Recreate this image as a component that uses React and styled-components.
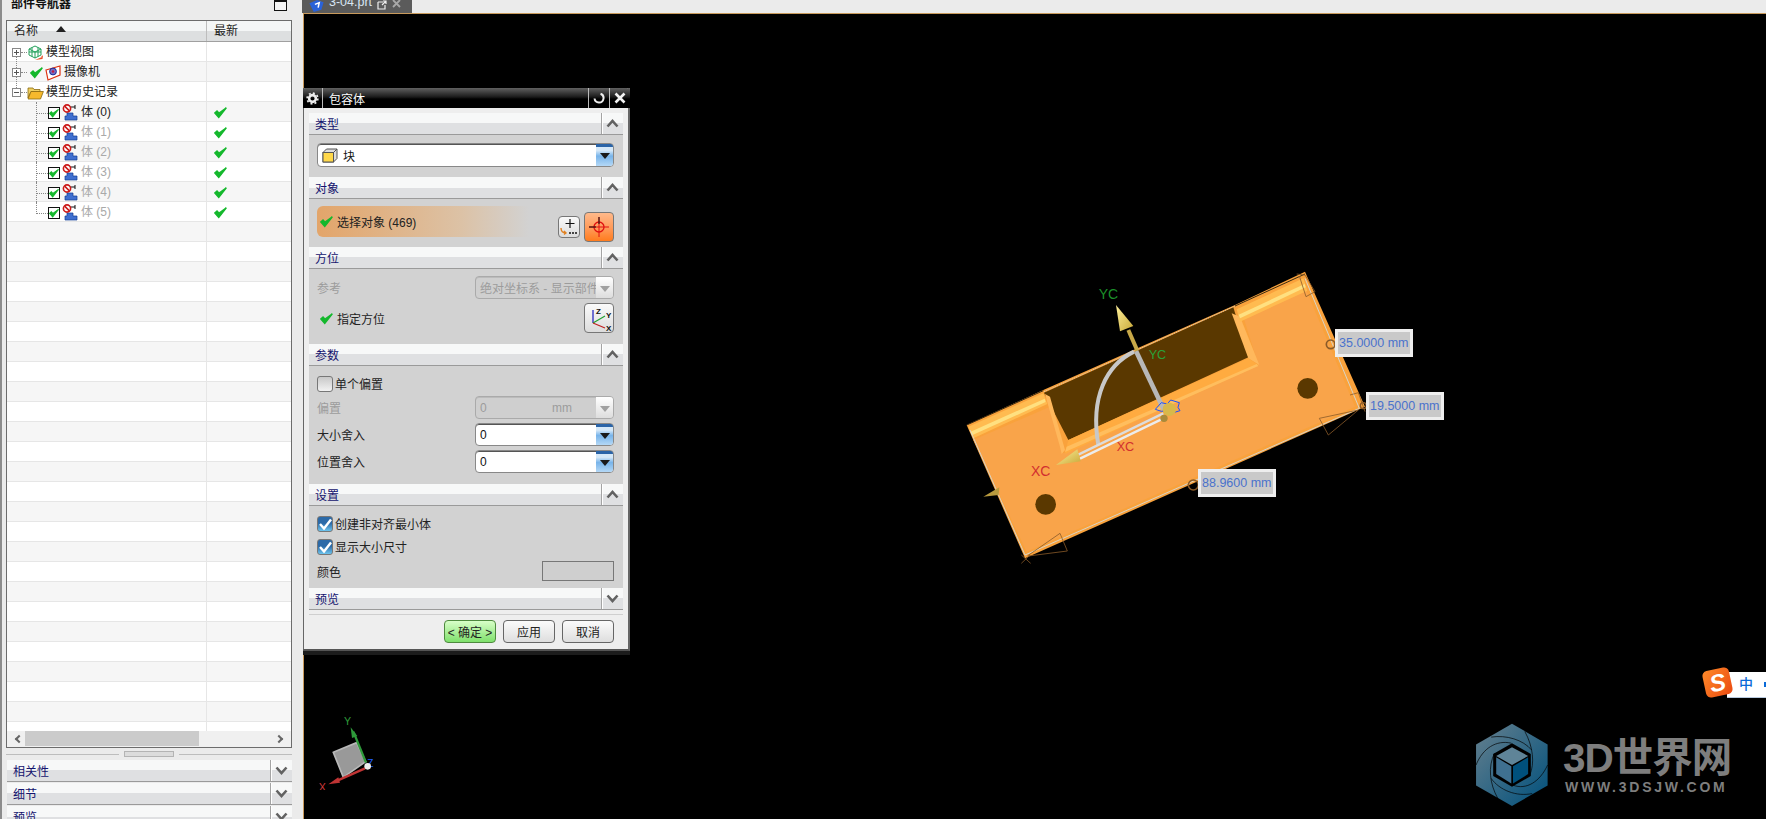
import React from "react";
import styled, { createGlobalStyle } from "styled-components";

const GlobalStyle = createGlobalStyle`
  html, body { margin: 0; padding: 0; background: #000; }
  * { box-sizing: border-box; }
  body { font-family: "Liberation Sans", "Noto Sans CJK SC", sans-serif; font-size: 12px; color: #222; }
`;

const CheckMark = ({ size = 13 }) => (
  <svg width={size} height={size} viewBox="0 0 12 12">
    <path d="M0.8 6.4 L4.4 10.6 L11.4 1.6 L4.7 6.6 L2.8 4.6 Z" fill="#14b82c" stroke="#14b82c" strokeWidth="1.3" />
  </svg>
);

const TreeCheck = () => (
  <CheckBoxFrame>
    <CheckMark size={10} />
  </CheckBoxFrame>
);

const BodyIcon = () => (
  <svg width="17" height="17" viewBox="0 0 17 17">
    <path d="M5 9h6v3h4v4H3v-4h2z" fill="#3f6fd0" stroke="#123c94" strokeWidth=".7" />
    <path d="M7 1v7M7 3h6M13 1v4" stroke="#111" strokeWidth="1" fill="none" />
    <circle cx="5" cy="4.5" r="3.6" fill="#fff" stroke="#cc1a1a" strokeWidth="1.6" />
    <path d="M2.6 2.2 L7.4 6.8" stroke="#cc1a1a" strokeWidth="1.6" />
  </svg>
);

const ModelViewIcon = () => (
  <svg width="17" height="16" viewBox="0 0 17 16">
    <path d="M8 1 L14 4 V10 L8 13 L2 10 V4 Z M2 4 L8 7 L14 4 M8 7 V13 M2 7 L14 7 M5 2.5 V11.5 M11 2.5 V11.5" fill="none" stroke="#22a05a" strokeWidth="1" />
    <path d="M8 15 L15 12 L14 11 L16 10.5 L15.5 14" fill="#e8522a" />
  </svg>
);

const CameraIcon = () => (
  <svg width="17" height="16" viewBox="0 0 17 16">
    <path d="M1 5 L15 1 L15 10 L3 15 Z" fill="#fff" stroke="#dd3010" strokeWidth="1.2" />
    <circle cx="8" cy="6.5" r="3.4" fill="#7a6fc0" stroke="#1a2a9a" strokeWidth="1" />
    <circle cx="8" cy="6.5" r="1.2" fill="#c01a40" />
  </svg>
);

const FolderIcon = () => (
  <svg width="17" height="14" viewBox="0 0 17 14">
    <path d="M1 12 V2 H6 L7 3.5 H13 V5.5 H4 Z" fill="#f0d060" stroke="#8a6a10" strokeWidth=".8" />
    <path d="M1 13 L4 5.5 H16.4 L13.5 13 Z" fill="#f6b92c" stroke="#8a6a10" strokeWidth=".8" />
  </svg>
);

const Chevron = ({ up }) => (
  <svg width="13" height="9" viewBox="0 0 13 9">
    <polyline points={up ? "1.5,7.5 6.5,2 11.5,7.5" : "1.5,1.5 6.5,7 11.5,1.5"} fill="none" stroke="#626262" strokeWidth="2.6" />
  </svg>
);

const BlockIcon = () => (
  <svg width="16" height="15" viewBox="0 0 16 15">
    <path d="M1 4.5 L4.5 1 H15 V10.5 L11.5 14 H1 Z" fill="#ddd" stroke="#555" />
    <rect x="1" y="4.5" width="10.5" height="9.5" fill="#ffd84a" stroke="#555" />
    <path d="M11.5 4.5 L15 1" stroke="#555" />
  </svg>
);

const Page = styled.div`
  width: 1766px;
  height: 819px;
  display: flex;
  overflow: hidden;
`;

const NavPanel = styled.aside`
  width: 303px;
  flex: none;
  height: 819px;
  overflow: hidden;
  background: #ebebeb;
  border-left: 2px solid #8c8c8c;
  padding: 0 11px 0 4px;
  display: flex;
  flex-direction: column;
`;

const NavTitle = styled.div`
  height: 20px;
  flex: none;
  display: flex;
  justify-content: space-between;
  padding-right: 5px;
  align-items: flex-start;
`;

const NavTitleText = styled.span`
  font-weight: 700;
  font-size: 12px;
  line-height: 14px;
  margin: -3px 0 0 5px;
  color: #111;
`;

const PaneToggle = styled.span`
  width: 13px;
  height: 12px;
  border: 1px solid #111;
  border-top-width: 3px;
  background: #f4f4f4;
  margin-top: -1px;
`;

const TreeBox = styled.div`
  height: 728px;
  flex: none;
  border: 1px solid #6c6c6c;
  background: #fff;
  display: flex;
  flex-direction: column;
`;

const TreeHeader = styled.div`
  height: 21px;
  flex: none;
  display: flex;
  background: linear-gradient(#f4f6f6 0 50%, #dddfe0 50% 100%);
  border-bottom: 1px solid #a0a0a0;
  line-height: 20px;
`;

const HeadName = styled.div`
  width: 200px;
  padding-left: 7px;
  display: flex;
  align-items: center;
  gap: 18px;
  border-right: 1px solid #bdbdbd;
`;

const SortArrow = styled.span`
  width: 0;
  height: 0;
  border: 5px solid transparent;
  border-top: 0;
  border-bottom: 6px solid #222;
  margin: -4px 0 0 0;
`;

const HeadLatest = styled.div`
  padding-left: 7px;
`;

const TreeRows = styled.div`
  flex: 1;
  overflow: hidden;
`;

const Row = styled.div`
  height: 20px;
  display: flex;
  background: ${(p) => (p.$odd ? "#f6f6f6" : "#fff")};
  border-bottom: 1px solid #e6e6e6;
`;

const NameCell = styled.div`
  width: 200px;
  flex: none;
  display: flex;
  align-items: center;
  color: ${(p) => (p.$dim ? "#a9a9a9" : "#222")};
  line-height: 19px;
  border-right: 1px solid #e6e6e6;
  padding-top: 2px;
  gap: 2px;
`;

const LatestCell = styled.div`
  flex: 1;
  display: flex;
  align-items: center;
  padding: 2px 0 0 7px;
`;

const Expander = styled.span`
  width: 9px;
  height: 9px;
  margin: 0 ${(p) => (p.$wide ? 7 : 4)}px 0 5px;
  flex: none;
  border: 1px solid #888;
  background: linear-gradient(#555, #555) center/5px 1px no-repeat, #fff;
  position: relative;
  ${(p) =>
    p.$plus &&
    "background: linear-gradient(#555, #555) center/5px 1px no-repeat, linear-gradient(#555, #555) center/1px 5px no-repeat, #fff;"}
  &::after {
    content: "";
    position: absolute;
    left: 8px;
    top: 3px;
    width: 6px;
    border-top: 1px dotted #888;
  }
  &::before {
    content: "";
    position: absolute;
    left: 3px;
    top: 8px;
    height: ${(p) => (p.$last ? 0 : 13)}px;
    border-left: 1px dotted #888;
  }
`;

const Guide = styled.span`
  width: 12px;
  height: 20px;
  flex: none;
  margin-left: 29px;
  margin-right: -2px;
  margin-top: -2px;
  border-left: 1px dotted #888;
  position: relative;
  ${(p) => p.$last && "height: 12px; align-self: flex-start;"}
  &::after {
    content: "";
    position: absolute;
    left: 0;
    top: 11px;
    width: 11px;
    border-top: 1px dotted #888;
  }
`;

const Label = styled.span`
  white-space: nowrap;
`;

const CheckBoxFrame = styled.span`
  width: 12px;
  height: 12px;
  flex: none;
  border: 1px solid #111;
  background: #fff;
  display: flex;
  align-items: center;
  justify-content: center;
`;

const HScroll = styled.div`
  height: 16px;
  flex: none;
  background: #f0f0f0;
  display: flex;
  align-items: center;
  padding: 0 6px;
  justify-content: space-between;
  position: relative;
`;

const HThumb = styled.span`
  position: absolute;
  left: 18px;
  top: 0;
  width: 174px;
  height: 15px;
  background: #cbcbcb;
`;

const ScrollArrow = styled.span`
  width: 6px;
  height: 6px;
  border-left: 2px solid #666;
  border-bottom: 2px solid #666;
  transform: rotate(${(p) => (p.$right ? 225 : 45)}deg);
  margin: 0 3px;
`;

const Splitter = styled.div`
  height: 12px;
  flex: none;
  display: flex;
  align-items: center;
  gap: 5px;
`;

const SplitLine = styled.span`
  flex: 1;
  border-top: 1px solid #bdbdbd;
`;

const SplitHandle = styled.span`
  width: 50px;
  height: 6px;
  background: #dcdcdc;
  border: 1px solid #b4b4b4;
`;

const Accordion = styled.div`
  display: flex;
  flex-direction: column;
  gap: 1px;
  padding-left: 1px;
`;

const SectionHeader = styled.div`
  height: ${(p) => p.$h || 22}px;
  display: flex;
  flex: none;
  align-items: stretch;
  justify-content: space-between;
  background: linear-gradient(#f7f8f8 0 50%, #dfe0e2 50% 100%);
  border-bottom: 1px solid #9a9a9a;
  color: #14146e;
  font-size: 12px;
`;

const SectionTitle = styled.span`
  padding-left: ${(p) => p.$pad || 6}px;
  line-height: 24px;
`;

const ChevronCell = styled.span`
  width: 22px;
  border-left: 1px solid #a4a4a4;
  box-shadow: inset 1px 0 0 #fff;
  display: flex;
  align-items: center;
  justify-content: center;
`;

const Viewport = styled.main`
  flex: 1;
  display: flex;
  flex-direction: column;
`;

const TabStrip = styled.div`
  height: 13px;
  flex: none;
  background: #ebebeb;
  display: flex;
`;

const FileTab = styled.div`
  width: 110px;
  margin-left: -1px;
  height: 13px;
  background: #5b5b5b;
  display: flex;
  align-items: flex-start;
  padding-left: 7px;
  gap: 5px;
  color: #d9e6f4;
  font-size: 12.5px;
  overflow: hidden;
`;

const TabText = styled.span`
  line-height: 14px;
  margin-top: -5px;
`;

const Canvas = styled.div`
  flex: 1;
  background: #000;
  box-shadow: inset 1px 1px 0 #c99a5c;
  position: relative;
  overflow: hidden;
`;

const Dialog = styled.section`
  position: absolute;
  left: -1px;
  top: 75px;
  width: 328px;
  height: 563px;
  background: #eeeeee;
  border: 2px solid #666;
  border-top: 0;
  border-bottom-color: #555;
  display: flex;
  flex-direction: column;
  box-shadow: 0 4px 0 #1c1c1c;
`;

const TitleBar = styled.div`
  height: 20px;
  flex: none;
  margin: 0 -2px;
  background: linear-gradient(#606060, #1a1a1a 45%, #000 55%);
  border-radius: 3px 3px 0 0;
  color: #fff;
  display: flex;
  align-items: center;
  font-size: 12px;
`;

const TitleCell = styled.span`
  width: ${(p) => p.$w}px;
  height: 100%;
  display: flex;
  align-items: center;
  justify-content: center;
  border-right: ${(p) => (p.$sep ? "1px solid #bbb" : "0")};
  border-left: ${(p) => (p.$lsep ? "1px solid #bbb" : "0")};
`;

const TitleText = styled.span`
  flex: 1;
  padding-left: 6px;
`;

const Sections = styled.div`
  padding: 5px 5px 0 5px;
  display: flex;
  flex-direction: column;
`;

const SectionBody = styled.div`
  background: #d2d2d2;
  height: ${(p) => p.$h}px;
  padding: ${(p) => p.$top}px 9px 0 8px;
  display: flex;
  flex-direction: column;
  gap: ${(p) => p.$gap || 0}px;
`;

const FieldRow = styled.div`
  display: flex;
  align-items: center;
  justify-content: space-between;
  min-height: ${(p) => p.$h || 23}px;
  color: ${(p) => (p.$dim ? "#9c9c9c" : "#222")};
`;

const Combo = styled.div`
  width: ${(p) => p.$w || 139}px;
  height: ${(p) => p.$h || 23}px;
  flex: none;
  display: flex;
  align-items: center;
  background: ${(p) => (p.$dim ? "#cfcfcf" : "#fff")};
  border: 1px solid ${(p) => (p.$dim ? "#aaa" : "#888")};
  border-radius: 4px;
  overflow: hidden;
  color: ${(p) => (p.$dim ? "#9c9c9c" : "#111")};
  box-shadow: inset 0 1px 0 ${(p) => (p.$dim ? "#bbb" : "#555")};
`;

const ComboText = styled.span`
  flex: 1;
  min-width: 0;
  padding-left: 4px;
  white-space: nowrap;
  overflow: hidden;
  display: flex;
  align-items: center;
  gap: 5px;
  font-size: 12px;
`;

const Unit = styled.span`
  width: 44px;
  flex: none;
  color: #9c9c9c;
  font-size: 12px;
`;

const DropButton = styled.span`
  width: 17px;
  height: 100%;
  flex: none;
  display: flex;
  align-items: center;
  justify-content: center;
  background: ${(p) =>
    p.$dim ? "linear-gradient(#fff, #ddd)" : "linear-gradient(#2a64a8 0 12%, #d5e8f8 14% 30%, #78b4ea 55%, #b4d8f6)"};
  &::after {
    content: "";
    border: 5px solid transparent;
    border-bottom: 0;
    border-top: 6px solid ${(p) => (p.$dim ? "#a0a0a0" : "#1a1a1a")};
    margin-top: 2px;
  }
`;

const ObjectBar = styled.div`
  height: 31px;
  display: flex;
  align-items: center;
  padding-left: 3px;
  gap: 4px;
  border-radius: 6px 0 0 6px;
  background: linear-gradient(90deg, #e3a56a, #dcc2a6 60%, #d2d2d2 88%);
  color: #222;
`;

const ObjectLine = styled.div`
  display: flex;
  flex: 1;
  justify-content: space-between;
  position: relative;
`;

const ObjectMain = styled(ObjectBar)`
  flex: 1;
`;

const ToolButton = styled.span`
  width: ${(p) => p.$w || 30}px;
  height: ${(p) => p.$h || 30}px;
  flex: none;
  display: flex;
  align-items: center;
  justify-content: center;
  border: 1px solid #777;
  border-radius: 4px;
  background: ${(p) => (p.$hot ? "linear-gradient(#ffb98a, #ff9a58 55%, #ff7c1e)" : "linear-gradient(#fafafa, #dcdcdc)")};
`;

const ToolButtons = styled.span`
  display: flex;
  align-items: center;
  gap: 4px;
`;

const CheckLabel = styled.span`
  display: inline-flex;
  align-items: center;
  gap: 4px;
  padding-left: 3px;
`;

const CheckField = styled.label`
  display: flex;
  align-items: center;
  gap: 2px;
  height: ${(p) => p.$h || 17}px;
`;

const Tick = styled.span`
  width: 16px;
  height: 16px;
  flex: none;
  border: 1px solid #777;
  border-radius: 3px;
  display: flex;
  align-items: center;
  justify-content: center;
  background: ${(p) => (p.$on ? "linear-gradient(#2c6aa8 0 45%, #6cc4ee)" : "linear-gradient(#c8c8c8, #f2f2f2)")};
`;

const Swatch = styled.span`
  width: 72px;
  height: 20px;
  border: 1px solid #777;
  background: #cfcfcf;
`;

const DialogFooter = styled.div`
  margin: 4px 5px 0;
  border-top: 1px solid #cfcfcf;
  padding: 5px 9px 0 0;
  display: flex;
  justify-content: flex-end;
  gap: 7px;
`;

const ActionButton = styled.button`
  width: 52px;
  height: 23px;
  padding: 0;
  border: 1px solid ${(p) => (p.$primary ? "#4e8a3e" : "#666")};
  border-radius: 4px;
  background: ${(p) => (p.$primary ? "linear-gradient(#d8ffc8, #7fe06c)" : "linear-gradient(#fbfbfb, #dedede)")};
  font: 12px "Liberation Sans", "Noto Sans CJK SC", sans-serif;
  color: #222;
  white-space: pre;
`;

const ModelSvg = styled.svg`
  position: absolute;
  left: 647px;
  top: 237px;
`;

const TriadSvg = styled.svg`
  position: absolute;
  left: 7px;
  top: 697px;
`;

const DimLabel = styled.div`
  position: absolute;
  left: ${(p) => p.$x}px;
  top: ${(p) => p.$y}px;
  width: 78px;
  height: 28px;
  background: #c9c9c9;
  border: 3px solid #eeeeee;
  color: #4a72cc;
  font-size: 12.5px;
  line-height: 22px;
  padding-left: 1px;
  white-space: nowrap;
`;

const ImeBar = styled.div`
  position: absolute;
  left: 1424px;
  top: 659px;
  width: 39px;
  height: 26px;
  background: #fff;
  border-bottom: 1px solid #b9cbe0;
  color: #0a6ad8;
  font-size: 14px;
  font-weight: 500;
  line-height: 25px;
  padding-left: 12px;
  &::after {
    content: "";
    position: absolute;
    right: 0;
    top: 10px;
    width: 2px;
    height: 5px;
    background: #0a6ad8;
  }
`;

const ImeLogo = styled.div`
  position: absolute;
  left: 1401px;
  top: 656px;
  width: 27px;
  height: 27px;
  border-radius: 5px;
  background: linear-gradient(135deg, #ff8a2a, #ea4a10);
  transform: rotate(-12deg);
  color: #fff;
  font: italic 700 24px/27px "Liberation Sans", sans-serif;
  text-align: center;
`;

const Watermark = styled.div`
  position: absolute;
  left: 1172px;
  top: 710px;
  display: flex;
  align-items: center;
  gap: 14px;
  color: #7e7e7e;
`;

const Brand = styled.div`
  display: flex;
  flex-direction: column;
`;

const BrandName = styled.span`
  font: 700 40.5px/44px "Liberation Sans", "Noto Sans CJK SC", sans-serif;
  letter-spacing: -1px;
  white-space: nowrap;
`;

const BrandUrl = styled.span`
  font: 700 14px/14px "Liberation Sans", sans-serif;
  letter-spacing: 2.75px;
  white-space: nowrap;
  padding-left: 2px;
`;

const children = [0, 1, 2, 3, 4, 5];
const TOTAL_ROWS = 35;

function TreeTable() {
  const rows = [];
  for (let i = 0; i < TOTAL_ROWS; i++) {
    const odd = i % 2 === 1;
    if (i === 0) {
      rows.push(
        <Row key={i}>
          <NameCell>
            <Expander $plus />
            <ModelViewIcon />
            <Label>模型视图</Label>
          </NameCell>
          <LatestCell />
        </Row>
      );
    } else if (i === 1) {
      rows.push(
        <Row key={i} $odd>
          <NameCell>
            <Expander $plus $wide />
            <CheckMark />
            <CameraIcon />
            <Label>摄像机</Label>
          </NameCell>
          <LatestCell />
        </Row>
      );
    } else if (i === 2) {
      rows.push(
        <Row key={i}>
          <NameCell>
            <Expander $last />
            <FolderIcon />
            <Label>模型历史记录</Label>
          </NameCell>
          <LatestCell />
        </Row>
      );
    } else if (i < 9) {
      const n = children[i - 3];
      rows.push(
        <Row key={i} $odd={odd}>
          <NameCell $dim={n > 0}>
            <Guide $last={n === 5} />
            <TreeCheck />
            <BodyIcon />
            <Label>体 ({n})</Label>
          </NameCell>
          <LatestCell>
            <CheckMark />
          </LatestCell>
        </Row>
      );
    } else {
      rows.push(
        <Row key={i} $odd={odd}>
          <NameCell />
          <LatestCell />
        </Row>
      );
    }
  }
  return <TreeRows>{rows}</TreeRows>;
}

function Section({ title, up = true, children: body, h, top, gap }) {
  return (
    <>
      <SectionHeader>
        <SectionTitle>{title}</SectionTitle>
        <ChevronCell>
          <Chevron up={up} />
        </ChevronCell>
      </SectionHeader>
      {body && (
        <SectionBody $h={h} $top={top} $gap={gap}>
          {body}
        </SectionBody>
      )}
    </>
  );
}

function Model() {
  return (
    <ModelSvg width="510" height="330" viewBox="0 0 1530 990">
      <defs>
        <linearGradient id="cone" x1="0" y1="0" x2="1" y2="1">
          <stop offset="0" stopColor="#fff09a" />
          <stop offset="1" stopColor="#c8a838" />
        </linearGradient>
      </defs>
      <polygon points="50,525 280,420 855,165 1065,65 1245,470 225,925" fill="#f9a23c" />
      <polygon points="70,570 300,470 340,610 925,345 880,200 1060,100 1215,470 230,905" fill="#f9a44a" />
      <polygon points="282,428 850,172 895,322 355,570" fill="#5a3800" />
      <polygon points="845,190 870,200 928,345 895,325" fill="#ffb85c" />
      <polygon points="285,432 300,440 345,600 335,612 330,590" fill="#ffb85c" />
      <polygon points="355,570 895,325 925,345 345,612" fill="#ffab40" />
      <polygon points="350,590 920,342 925,348 345,606" fill="#ffbe5e" />
      <polygon points="55,530 280,430 292,462 70,565" fill="#ffbb50" />
      <polygon points="62,545 284,446 287,456 66,556" fill="#ffe080" />
      <polygon points="860,178 1060,85 1072,122 870,215" fill="#ffbb50" />
      <polygon points="866,194 1064,102 1067,112 870,205" fill="#ffe080" />
      <circle cx="1073" cy="415" r="31" fill="#5a3800" />
      <circle cx="287" cy="763" r="31" fill="#5a3800" />
      <polyline points="50,525 280,422" fill="none" stroke="#3a2a10" strokeWidth="3" />
      <polyline points="282,425 855,168" fill="none" stroke="#cfd8dc" strokeWidth="2" strokeDasharray="4 3" />
      <polyline points="855,168 1065,72" fill="none" stroke="#3a2a10" strokeWidth="3" />
      <polyline points="60,540 225,915 1228,475 1065,85" fill="none" stroke="#cfe0e8" strokeWidth="2.4" />
      <g fill="none" stroke="#8a5a28" strokeWidth="2.4">
        <polyline points="1040,72 1065,75 1095,125 1068,140 1048,78" />
        <polyline points="1200,435 1225,428 1245,485" />
        <polyline points="1108,505 1225,480 1135,555 1108,505" />
        <polyline points="232,918 330,850 352,903 235,918" />
        <path d="M214 915 L242 940 M240 915 L214 940" />
        <circle cx="1142" cy="283" r="13" strokeWidth="5" />
        <circle cx="1240" cy="467" r="9" strokeWidth="4" />
        <circle cx="730" cy="705" r="15" strokeWidth="5" />
      </g>
      <polygon points="100,740 148,712 146,735" fill="#b89a3e" />
      <path d="M552 305 C470 345 420 440 445 585" fill="none" stroke="#c8c8c8" strokeWidth="12" />
      <path d="M558 303 L642 480" stroke="#b8b8b8" strokeWidth="14" />
      <path d="M385 614 L640 490" stroke="#dcdcdc" strokeWidth="7" />
      <path d="M390 626 L645 503" stroke="#ececec" strokeWidth="7" />
      <path d="M535 240 L562 302" stroke="#c8a848" strokeWidth="12" />
      <polygon points="498,165 550,228 510,244" fill="url(#cone)" />
      <polygon points="318,645 382,598 392,634" fill="url(#cone)" />
      <path d="M616 478 L634 458 L652 462 L662 450 L688 458 L684 472 L690 482 L670 488 L650 482 L634 484 Z" fill="none" stroke="#1a50ff" strokeWidth="3" />
      <circle cx="658" cy="478" r="20" fill="#d8b84a" />
      <circle cx="642" cy="505" r="11" fill="#a88a3a" />
      <text x="446" y="146" fontSize="42" fill="#1c8f2a" fontFamily="Liberation Sans">YC</text>
      <text x="596" y="327" fontSize="38" fill="#2aa038" fontFamily="Liberation Sans">YC</text>
      <text x="243" y="677" fontSize="42" fill="#d22f2f" fontFamily="Liberation Sans">XC</text>
      <text x="500" y="603" fontSize="38" fill="#d22f2f" fontFamily="Liberation Sans">XC</text>
    </ModelSvg>
  );
}

function Triad() {
  return (
    <TriadSvg width="80" height="80" viewBox="930 60 240 240">
      <polygon points="1000,187 1070,158 1097,215 1030,262" fill="#999" stroke="#b8b8b8" strokeWidth="5" />
      <path d="M1098 218 L1060 125" stroke="#2e9a3a" strokeWidth="7" />
      <polygon points="1052,112 1072,138 1056,144" fill="#2e9a3a" />
      <path d="M1095 235 L1012 272" stroke="#c03434" strokeWidth="7" />
      <polygon points="985,283 1015,262 1020,278" fill="#c03434" />
      <text x="1032" y="106" fontSize="32" fill="#2e9a3a" fontFamily="Liberation Sans">Y</text>
      <text x="956" y="303" fontSize="32" fill="#d23a3a" fontFamily="Liberation Sans">X</text>
      <text x="1102" y="232" fontSize="30" fill="#2060ff" fontFamily="Liberation Sans">Z</text>
      <circle cx="1103" cy="229" r="10" fill="#eee" />
    </TriadSvg>
  );
}

function Logo() {
  return (
    <svg width="74" height="84" viewBox="127 220 220 250">
      <defs>
        <linearGradient id="hex" x1="0" y1="0" x2="1" y2="1">
          <stop offset="0" stopColor="#66808e" />
          <stop offset="1" stopColor="#00507c" />
        </linearGradient>
      </defs>
      <polygon points="237,222 343,284 343,406 237,467 130,406 130,284" fill="url(#hex)" />
      <g fill="none" stroke="#000" strokeWidth="2">
        <path d="M175 262 C220 255 270 270 295 300" />
        <path d="M275 245 C300 290 305 340 290 375" />
        <path d="M343 345 C320 395 280 420 240 405" />
        <path d="M297 430 C250 440 200 420 175 385" />
        <path d="M195 445 C170 400 165 350 185 310" />
        <path d="M130 345 C150 295 190 270 235 280" />
      </g>
      <polygon points="237,280 293,312 293,378 237,410 181,378 181,312" fill="#000" />
      <polygon points="237,292 285,318 237,345 190,318" fill="#5f8498" />
      <polygon points="190,322 235,349 235,400 190,372" fill="#3f7090" />
      <polygon points="285,322 240,349 240,400 285,372" fill="#00507c" />
    </svg>
  );
}

const Crosshair = () => (
  <svg width="20" height="20" viewBox="0 0 20 20">
    <circle cx="10" cy="10" r="5" fill="none" stroke="#e01010" strokeWidth="1.3" />
    <path d="M10 0v20M0 10h20" stroke="#e01010" strokeWidth="1" />
    <path d="M10 0v7M0 10h7" stroke="#111" strokeWidth="1" />
  </svg>
);

const AddObject = () => (
  <svg width="18" height="18" viewBox="0 0 18 18">
    <path d="M10 1v9M5.5 5.5h9" stroke="#111" strokeWidth="1.2" />
    <path d="M1 10 C1 14 3 15 6 15 M4 13 L6 15 L4 16.5" fill="none" stroke="#e08020" strokeWidth="1.4" />
    <path d="M9 15h2M12 15h2M15 15h2" stroke="#111" strokeWidth="1.6" />
  </svg>
);

const Axes = () => (
  <svg width="26" height="26" viewBox="0 0 26 26">
    <path d="M7 18 V5" stroke="#1818c0" strokeWidth="1.2" />
    <path d="M7 18 L19 11" stroke="#20a030" strokeWidth="1.2" />
    <path d="M7 18 L19 23" stroke="#c02020" strokeWidth="1.2" />
    <text x="10" y="9" fontSize="8" fontWeight="700" fill="#111" fontFamily="Liberation Sans">Z</text>
    <text x="20" y="13" fontSize="8" fontWeight="700" fill="#111" fontFamily="Liberation Sans">Y</text>
    <text x="20" y="26" fontSize="8" fontWeight="700" fill="#111" fontFamily="Liberation Sans">X</text>
  </svg>
);

const WhiteTick = () => (
  <svg width="13" height="12" viewBox="0 0 13 12">
    <path d="M1 6 L5 10.5 L12 1.5" fill="none" stroke="#fff" strokeWidth="2.4" />
  </svg>
);

export default function App() {
  return (
    <Page>
      <GlobalStyle />
      <NavPanel>
        <NavTitle>
          <NavTitleText>部件导航器</NavTitleText>
          <PaneToggle />
        </NavTitle>
        <TreeBox>
          <TreeHeader>
            <HeadName>
              名称
              <SortArrow />
            </HeadName>
            <HeadLatest>最新</HeadLatest>
          </TreeHeader>
          <TreeTable />
          <HScroll>
            <ScrollArrow />
            <HThumb />
            <ScrollArrow $right />
          </HScroll>
        </TreeBox>
        <Splitter>
          <SplitLine />
          <SplitHandle />
          <SplitLine />
        </Splitter>
        <Accordion>
          {["相关性", "细节", "预览"].map((t) => (
            <SectionHeader key={t}>
              <SectionTitle $pad={6}>{t}</SectionTitle>
              <ChevronCell>
                <Chevron />
              </ChevronCell>
            </SectionHeader>
          ))}
        </Accordion>
      </NavPanel>

      <Viewport>
        <TabStrip>
          <FileTab>
            <svg width="15" height="12" viewBox="0 0 13 11">
              <path d="M0 3 L7 0 L13 2 L11 9 L4 11 Z" fill="#2a62d8" />
              <path d="M5 4 L9 2.5 L8 7" fill="none" stroke="#fff" strokeWidth="1.4" />
            </svg>
            <TabText>3-04.prt</TabText>
            <svg width="10" height="10" viewBox="0 0 10 10">
              <path d="M1 2h5M1 2v7h7V5M5 5l4-4M6 1h3v3" fill="none" stroke="#eee" strokeWidth="1.2" />
            </svg>
            <svg width="9" height="9" viewBox="0 0 9 9">
              <path d="M1 0 L8 7 M8 0 L1 7" stroke="#a8a8a8" strokeWidth="1.8" />
            </svg>
          </FileTab>
        </TabStrip>
        <Canvas>
          <Model />

          <DimLabel $x={1032} $y={316}>35.0000 mm</DimLabel>
          <DimLabel $x={1063} $y={379}>19.5000 mm</DimLabel>
          <DimLabel $x={895} $y={456}>88.9600 mm</DimLabel>

          <Dialog>
            <TitleBar>
              <TitleCell $w={21} $sep>
                <svg width="13" height="13" viewBox="0 0 13 13">
                  <circle cx="6.5" cy="6.5" r="3.4" fill="none" stroke="#eee" strokeWidth="2.6" />
                  <circle cx="6.5" cy="6.5" r="5.4" fill="none" stroke="#eee" strokeWidth="1.6" strokeDasharray="2 2.2" />
                </svg>
              </TitleCell>
              <TitleText>包容体</TitleText>
              <TitleCell $w={21} $lsep>
                <svg width="12" height="12" viewBox="0 0 12 12">
                  <path d="M6 1.5 A4.5 4.5 0 1 1 2 8" fill="none" stroke="#eee" strokeWidth="2" transform="rotate(20 6 6)" />
                </svg>
              </TitleCell>
              <TitleCell $w={21} $lsep>
                <svg width="12" height="12" viewBox="0 0 12 12">
                  <path d="M1.5 1.5 L10.5 10.5 M10.5 1.5 L1.5 10.5" stroke="#f2f2f2" strokeWidth="2.6" />
                </svg>
              </TitleCell>
            </TitleBar>
            <Sections>
              <Section title="类型" h={42} top={8}>
                <Combo $w={297} $h={24}>
                  <ComboText>
                    <BlockIcon />
                    块
                  </ComboText>
                  <DropButton />
                </Combo>
              </Section>
              <Section title="对象" h={48} top={7}>
                <ObjectLine>
                  <ObjectMain>
                    <CheckMark />
                    选择对象 (469)
                  </ObjectMain>
                  <ToolButtons>
                    <ToolButton $w={22} $h={22}>
                      <AddObject />
                    </ToolButton>
                    <ToolButton $hot>
                      <Crosshair />
                    </ToolButton>
                  </ToolButtons>
                </ObjectLine>
              </Section>
              <Section title="方位" h={75} top={7} gap={4}>
                <FieldRow $dim>
                  参考
                  <Combo $dim>
                    <ComboText>绝对坐标系 - 显示部件</ComboText>
                    <DropButton $dim />
                  </Combo>
                </FieldRow>
                <FieldRow $h={30}>
                  <CheckLabel>
                    <CheckMark />
                    <span>指定方位</span>
                  </CheckLabel>
                  <ToolButton>
                    <Axes />
                  </ToolButton>
                </FieldRow>
              </Section>
              <Section title="参数" h={118} top={9} gap={4}>
                <CheckField>
                  <Tick />
                  单个偏置
                </CheckField>
                <FieldRow $dim>
                  偏置
                  <Combo $dim>
                    <ComboText>0</ComboText>
                    <Unit>mm</Unit>
                    <DropButton $dim />
                  </Combo>
                </FieldRow>
                <FieldRow>
                  大小舍入
                  <Combo>
                    <ComboText>0</ComboText>
                    <DropButton />
                  </Combo>
                </FieldRow>
                <FieldRow>
                  位置舍入
                  <Combo>
                    <ComboText>0</ComboText>
                    <DropButton />
                  </Combo>
                </FieldRow>
              </Section>
              <Section title="设置" h={82} top={9} gap={6}>
                <CheckField>
                  <Tick $on>
                    <WhiteTick />
                  </Tick>
                  创建非对齐最小体
                </CheckField>
                <CheckField>
                  <Tick $on>
                    <WhiteTick />
                  </Tick>
                  显示大小尺寸
                </CheckField>
                <FieldRow $h={20}>
                  颜色
                  <Swatch />
                </FieldRow>
              </Section>
              <Section title="预览" up={false} />
            </Sections>
            <DialogFooter>
              <ActionButton $primary>{"< 确定 >"}</ActionButton>
              <ActionButton>应用</ActionButton>
              <ActionButton>取消</ActionButton>
            </DialogFooter>
          </Dialog>

          <Triad />

          <ImeBar>中</ImeBar>
          <ImeLogo>S</ImeLogo>

          <Watermark>
            <Logo />
            <Brand>
              <BrandName>3D世界网</BrandName>
              <BrandUrl>WWW.3DSJW.COM</BrandUrl>
            </Brand>
          </Watermark>
        </Canvas>
      </Viewport>
    </Page>
  );
}
